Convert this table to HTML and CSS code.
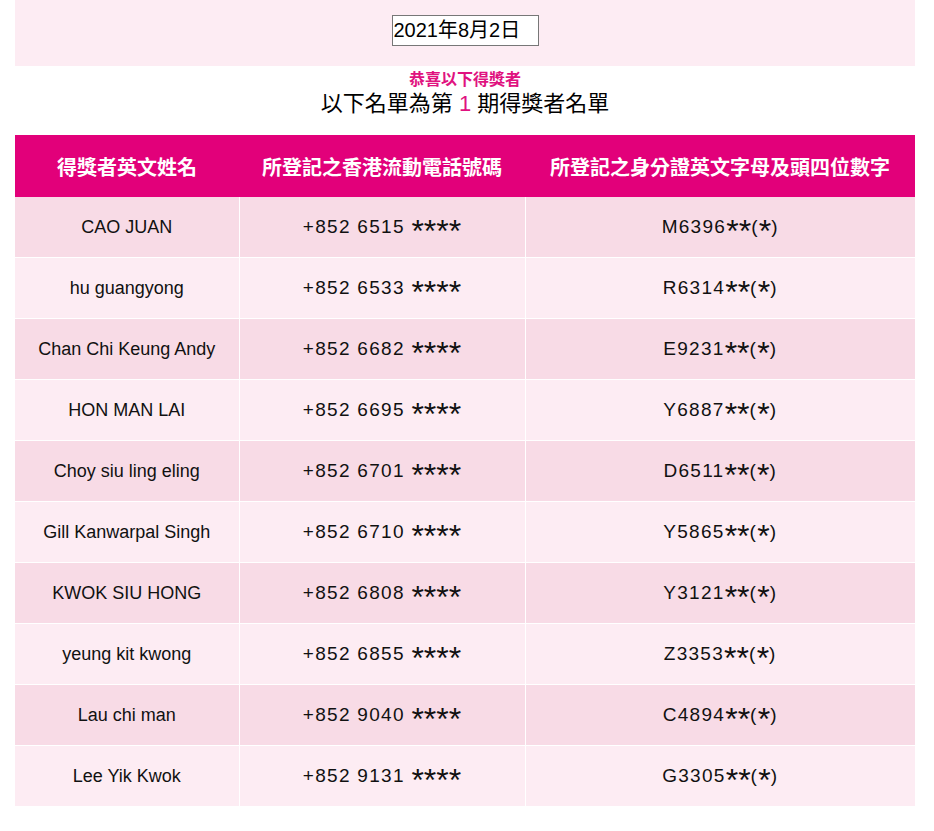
FILE: index.html
```html
<!DOCTYPE html>
<html lang="zh-Hant">
<head>
<meta charset="utf-8">
<title>得獎者名單</title>
<link rel="stylesheet" href="styles.css">
</head>
<body>
<div class="page">
  <div class="band">
    <div class="date">2021年8月2日</div>
  </div>
  <div class="congrats">恭喜以下得獎者</div>
  <div class="subtitle">以下名單為第 <span class="num">1</span> 期得獎者名單</div>
  <table class="winners">
    <colgroup><col class="c1"><col class="c2"><col class="c3"></colgroup>
    <thead>
      <tr><th>得獎者英文姓名</th><th>所登記之香港流動電話號碼</th><th>所登記之身分證英文字母及頭四位數字</th></tr>
    </thead>
    <tbody>
      <tr><td>CAO JUAN</td><td>+852 6515 <span class="m">****</span></td><td>M6396<span class="m">**</span>(<span class="m">*</span>)</td></tr>
      <tr><td>hu guangyong</td><td>+852 6533 <span class="m">****</span></td><td>R6314<span class="m">**</span>(<span class="m">*</span>)</td></tr>
      <tr><td>Chan Chi Keung Andy</td><td>+852 6682 <span class="m">****</span></td><td>E9231<span class="m">**</span>(<span class="m">*</span>)</td></tr>
      <tr><td>HON MAN LAI</td><td>+852 6695 <span class="m">****</span></td><td>Y6887<span class="m">**</span>(<span class="m">*</span>)</td></tr>
      <tr><td>Choy siu ling eling</td><td>+852 6701 <span class="m">****</span></td><td>D6511<span class="m">**</span>(<span class="m">*</span>)</td></tr>
      <tr><td>Gill Kanwarpal Singh</td><td>+852 6710 <span class="m">****</span></td><td>Y5865<span class="m">**</span>(<span class="m">*</span>)</td></tr>
      <tr><td>KWOK SIU HONG</td><td>+852 6808 <span class="m">****</span></td><td>Y3121<span class="m">**</span>(<span class="m">*</span>)</td></tr>
      <tr><td>yeung kit kwong</td><td>+852 6855 <span class="m">****</span></td><td>Z3353<span class="m">**</span>(<span class="m">*</span>)</td></tr>
      <tr><td>Lau chi man</td><td>+852 9040 <span class="m">****</span></td><td>C4894<span class="m">**</span>(<span class="m">*</span>)</td></tr>
      <tr><td>Lee Yik Kwok</td><td>+852 9131 <span class="m">****</span></td><td>G3305<span class="m">**</span>(<span class="m">*</span>)</td></tr>
    </tbody>
  </table>
</div>
</body>
</html>
```
FILE: styles.css
```css
html, body {
  margin: 0;
  padding: 0;
  background: #ffffff;
}
body {
  font-family: "Liberation Sans", "Noto Sans CJK TC", sans-serif;
  color: #111;
}
.page {
  width: 900px;
  margin-left: 15px;
}
.band {
  background: #fdecf3;
  height: 66px;
  display: flex;
  justify-content: center;
  align-items: flex-start;
  padding-top: 15px;
  box-sizing: border-box;
}
.date {
  width: 147px;
  height: 31px;
  box-sizing: border-box;
  border: 1px solid #777;
  background: #fff;
  font-size: 20px;
  line-height: 29px;
  padding-left: 1px;
  color: #000;
  white-space: nowrap;
}
.congrats {
  text-align: center;
  color: #e0127f;
  font-weight: bold;
  font-size: 16px;
  line-height: 20px;
  margin-top: 4px;
}
.subtitle {
  text-align: center;
  font-size: 22px;
  line-height: 28px;
  color: #000;
  margin-bottom: 17px;
}
.num { color: #e0127f; }
.winners {
  width: 900px;
  border-collapse: collapse;
  table-layout: fixed;
}
.c1 { width: 224px; }
.c2 { width: 286px; }
.c3 { width: 390px; }
.winners th {
  background: #e2007a;
  color: #fff;
  font-weight: bold;
  font-size: 20px;
  height: 62px;
  padding: 0;
  text-align: center;
  white-space: nowrap;
}
.winners td {
  height: 60px;
  padding: 0;
  text-align: center;
  font-size: 18px;
  color: #111;
  border: 1px solid #fff;
  white-space: nowrap;
}
.winners tbody td:nth-child(2),
.winners tbody td:nth-child(3) {
  font-size: 19px;
  letter-spacing: 1.3px;
}
.m {
  font-size: 32px;
  line-height: 0;
  letter-spacing: 0;
  vertical-align: -0.29em;
}
.winners tbody tr:nth-child(odd) td { background: #f8dbe6; }
.winners tbody tr:nth-child(even) td { background: #fdecf3; }
.winners tbody td:first-child { border-left: none; }
.winners tbody td:last-child { border-right: none; }
.winners tbody tr:first-child td { border-top: none; }
```
